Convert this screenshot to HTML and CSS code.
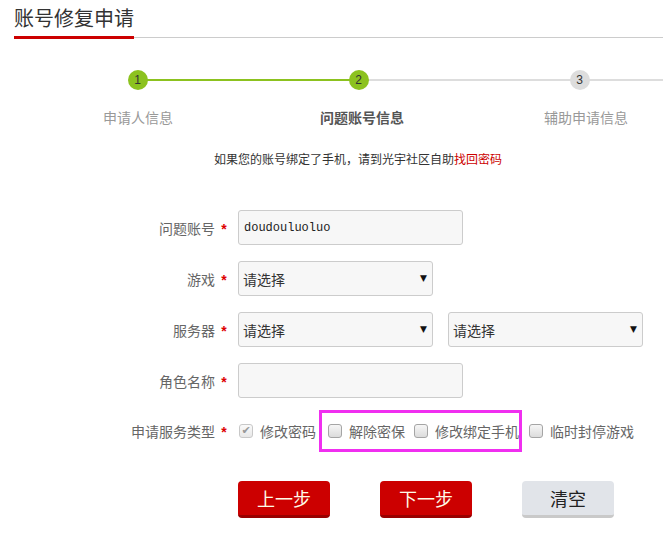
FILE: index.html
```html
<!DOCTYPE html>
<html lang="zh-CN">
<head>
  <meta charset="UTF-8">
  <meta name="viewport" content="width=device-width, initial-scale=1.0">
  <title>账号修复申请</title>
  <link rel="stylesheet" href="styles.css">
</head>
<body>
  <!-- 标题 -->
  <div class="head">
    <h1 class="title">账号修复申请</h1>
  </div>

  <!-- 步骤条 -->
  <div class="steps">
    <div class="step done"><span class="dot">1</span></div>
    <div class="step cur"><span class="dot">2</span></div>
    <div class="step"><span class="dot">3</span></div>
  </div>
  <div class="step-names">
    <span>申请人信息</span>
    <span class="cur">问题账号信息</span>
    <span>辅助申请信息</span>
  </div>

  <p class="notice">如果您的账号绑定了手机，请到光宇社区自助<a href="#">找回密码</a></p>

  <!-- 表单 -->
  <form class="form">
    <div class="row">
      <label class="lab">问题账号<i class="req">*</i></label>
      <input class="ipt" type="text" value="doudouluoluo">
    </div>
    <div class="row">
      <label class="lab">游戏<i class="req">*</i></label>
      <div class="sel">
        <select><option>请选择</option></select>
        <span class="arrow">▼</span>
      </div>
    </div>
    <div class="row">
      <label class="lab">服务器<i class="req">*</i></label>
      <div class="sel">
        <select><option>请选择</option></select>
        <span class="arrow">▼</span>
      </div>
      <div class="sel sel-2">
        <select><option>请选择</option></select>
        <span class="arrow">▼</span>
      </div>
    </div>
    <div class="row">
      <label class="lab">角色名称<i class="req">*</i></label>
      <input class="ipt" type="text" value="">
    </div>
    <div class="row types">
      <label class="lab">申请服务类型<i class="req">*</i></label>
      <div class="opts">
        <span class="opt disabled"><span class="cb on">✔</span>修改密码</span>
        <div class="mark">
          <span class="opt"><span class="cb"></span>解除密保</span>
          <span class="opt"><span class="cb"></span>修改绑定手机</span>
        </div>
        <span class="opt last"><span class="cb"></span>临时封停游戏</span>
      </div>
    </div>
    <div class="btns">
      <button type="button" class="btn red">上一步</button>
      <button type="button" class="btn red">下一步</button>
      <button type="button" class="btn grey">清空</button>
    </div>
  </form>
</body>
</html>
```

FILE: styles.css
```css
* {
  margin: 0;
  padding: 0;
  box-sizing: border-box;
}
html, body {
  width: 100%;
  height: 100%;
  background: #fff;
  overflow: hidden;
  font-family: "Noto Sans CJK SC", sans-serif;
  color: #333;
}

/* 标题 */
.head {
  display: flex;
  margin-left: 14px;
  height: 38px;
  border-bottom: 1px solid #ccc;
}
.title {
  height: 39px;
  line-height: 35px;
  font-size: 20px;
  font-weight: normal;
  color: #333;
  border-bottom: 3px solid #c00;
}

/* 步骤条 */
.steps {
  display: flex;
  margin-top: 32px;
  padding-left: 27px;
  overflow: hidden;
}
.step {
  position: relative;
  flex: 0 0 221px;
  height: 20px;
  display: flex;
  justify-content: center;
}
.step::after {
  content: "";
  position: absolute;
  left: 50%;
  top: 9px;
  width: 100%;
  height: 2px;
  background: #ddd;
}
.step.done::after {
  background: #8cc21f;
}
.dot {
  position: relative;
  z-index: 1;
  width: 20px;
  height: 20px;
  border-radius: 50%;
  background: #ddd;
  font: 12px/20px "Liberation Sans", Arial, sans-serif;
  text-align: center;
  color: #333;
}
.done .dot, .cur .dot {
  background: #8cc21f;
}
.step-names {
  display: flex;
  margin-top: 17px;
  padding-left: 26px;
  overflow: hidden;
}
.step-names span {
  flex: 0 0 224px;
  text-align: center;
  font-size: 14px;
  line-height: 20px;
  color: #999;
}
.step-names .cur {
  color: #555;
  font-weight: bold;
}

.notice {
  margin-top: 22px;
  padding-left: 53px;
  text-align: center;
  font-size: 12px;
  line-height: 20px;
  color: #333;
}
.notice a {
  color: #c00;
  text-decoration: none;
}

/* 表单 */
.form {
  margin-top: 41px;
}
.row {
  display: flex;
  align-items: center;
  height: 35px;
  margin-bottom: 16px;
}
.lab {
  width: 238px;
  padding-right: 5px;
  text-align: right;
  font-size: 14px;
  color: #666;
}
.req {
  display: inline-block;
  width: 18px;
  text-align: center;
  font: bold 14px "Liberation Sans", Arial, sans-serif;
  font-style: normal;
  color: #d00;
}
.ipt {
  width: 225px;
  height: 35px;
  padding: 0 5px;
  border: 1px solid #ccc;
  border-radius: 3px;
  background: #f7f7f7;
  font: 12px "Liberation Mono", monospace;
  color: #222;
  outline: none;
}
.sel {
  position: relative;
  width: 195px;
  height: 35px;
}
.sel-2 {
  margin-left: 15px;
}
.sel select {
  appearance: none;
  -webkit-appearance: none;
  width: 100%;
  height: 100%;
  padding: 0 4px;
  border: 1px solid #ccc;
  border-radius: 3px;
  background: #f7f7f7;
  font-family: "Noto Sans CJK SC", sans-serif;
  font-size: 14px;
  color: #333;
  outline: none;
}
.arrow {
  position: absolute;
  right: 6px;
  top: 12px;
  font: 9px/10px "DejaVu Sans", sans-serif;
  color: #111;
  pointer-events: none;
}

/* 服务类型 */
.row.types {
  height: 42px;
  margin-top: -4px;
  margin-bottom: 0;
}
.opts {
  display: flex;
  align-items: center;
  margin-left: 1px;
}
.opt {
  display: flex;
  align-items: center;
  font-size: 14px;
  color: #666;
  white-space: nowrap;
}
.opt .cb {
  width: 14px;
  height: 14px;
  margin-right: 7px;
  border: 1px solid #a5a5a5;
  border-radius: 3px;
  background: linear-gradient(#f6f6f6, #dcdcdc);
}
.cb.on {
  border-color: #c8c8c8;
  background: linear-gradient(#fafafa, #e8e8e8);
  font: 11px/12px "DejaVu Sans", sans-serif;
  text-align: center;
  color: #999;
}
.mark {
  display: flex;
  align-items: center;
  height: 42px;
  margin-left: 3px;
  padding-left: 6px;
  border: 3px solid #f02ff0;
}
.mark .opt + .opt {
  margin-left: 9px;
}
.opt.last {
  margin-left: 7px;
}

/* 按钮 */
.btns {
  display: flex;
  gap: 50px;
  margin-top: 29px;
  padding-left: 238px;
}
.btn {
  width: 92px;
  height: 37px;
  border: none;
  border-radius: 4px;
  font-family: "Noto Sans CJK SC", sans-serif;
  font-size: 18px;
  cursor: pointer;
}
.btn.red {
  background: #cc0000;
  border-bottom: 3px solid #990000;
  color: #fffbe8;
}
.btn.grey {
  background: #e1e4e9;
  border-bottom: 3px solid #c9c9c9;
  color: #222;
}
```
